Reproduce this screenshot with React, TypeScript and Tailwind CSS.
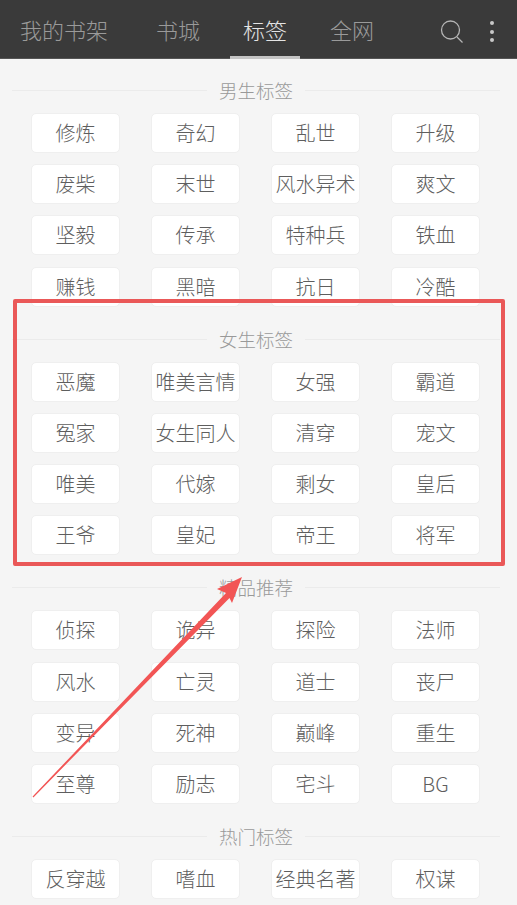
const sections = [
  { title: "男生标签", tags: ["修炼","奇幻","乱世","升级","废柴","末世","风水异术","爽文","坚毅","传承","特种兵","铁血","赚钱","黑暗","抗日","冷酷"] },
  { title: "女生标签", tags: ["恶魔","唯美言情","女强","霸道","冤家","女生同人","清穿","宠文","唯美","代嫁","剩女","皇后","王爷","皇妃","帝王","将军"] },
  { title: "精品推荐", tags: ["侦探","诡异","探险","法师","风水","亡灵","道士","丧尸","变异","死神","巅峰","重生","至尊","励志","宅斗","BG"] },
  { title: "热门标签", tags: ["反穿越","嗜血","经典名著","权谋"] },
];

export default function App() {
  return (
    <div className="relative w-[517px] h-[905px] overflow-hidden bg-[#f5f5f5] font-['Noto_Sans_CJK_SC',sans-serif]">
      <header className="h-[59px] bg-[#3a3a3a] flex items-stretch text-[22px] font-light text-[#9a9a9a] border-b border-[#555] whitespace-nowrap">
        <div className="w-[88px] ml-[20px] flex items-center">我的书架</div>
        <div className="w-[44px] ml-[48px] flex items-center justify-center">书城</div>
        <div className="relative w-[70px] ml-[30px] flex items-center justify-center text-[#e4e4e4]">
          标签
          <div className="absolute left-0 right-0 bottom-[-1px] h-[3px] bg-[#c4c4c4]" />
        </div>
        <div className="w-[44px] ml-[30px] flex items-center justify-center">全网</div>
        <svg className="ml-[66px] mt-[18px]" width="26" height="26" viewBox="0 0 26 26" fill="none" stroke="#b5b5b5" strokeWidth="1.3">
          <circle cx="10.5" cy="12" r="9" />
          <path d="M17 19l5.5 5.5" />
        </svg>
        <div className="ml-[24px] mt-[21px] flex flex-col gap-[4.5px]">
          <div className="w-[4px] h-[4px] rounded-full bg-[#c8c8c8]" />
          <div className="w-[4px] h-[4px] rounded-full bg-[#c8c8c8]" />
          <div className="w-[4px] h-[4px] rounded-full bg-[#c8c8c8]" />
        </div>
      </header>

      <main className="pt-[16.75px]">
        {sections.map((s) => (
          <section key={s.title} className="h-[248.75px]">
            <div className="flex items-center h-[28px] pl-[12px] pr-[17px] text-[18.5px] leading-[28px] font-light text-[#999]">
              <div className="flex-1 h-px bg-[#ebebeb] mt-[1px]" />
              <div className="w-[98px] text-center whitespace-nowrap">{s.title}</div>
              <div className="flex-1 h-px bg-[#ebebeb] mt-[1px]" />
            </div>
            <div className="grid grid-cols-[repeat(4,89px)] gap-x-[31px] gap-y-[11.25px] px-[31px] mt-[9px]">
              {s.tags.map((t) => (
                <div key={t} className="h-[40px] rounded-[5px] bg-white border border-[#efefef] flex items-center justify-center text-[20px] font-light text-[#5e5e5e] whitespace-nowrap">
                  {t}
                </div>
              ))}
            </div>
          </section>
        ))}
      </main>

      <div className="absolute left-[13px] top-[299px] w-[492px] h-[267px] border-[4px] border-[#ea5858] rounded-[2px]" />
      <svg className="absolute left-0 top-0 pointer-events-none" width="517" height="905" viewBox="0 0 517 905">
        <polygon points="32.6,796.6 226,593 217,589 242,577 232,603 229.5,598 33.4,797.4" fill="#f25555" />
      </svg>
    </div>
  );
}
